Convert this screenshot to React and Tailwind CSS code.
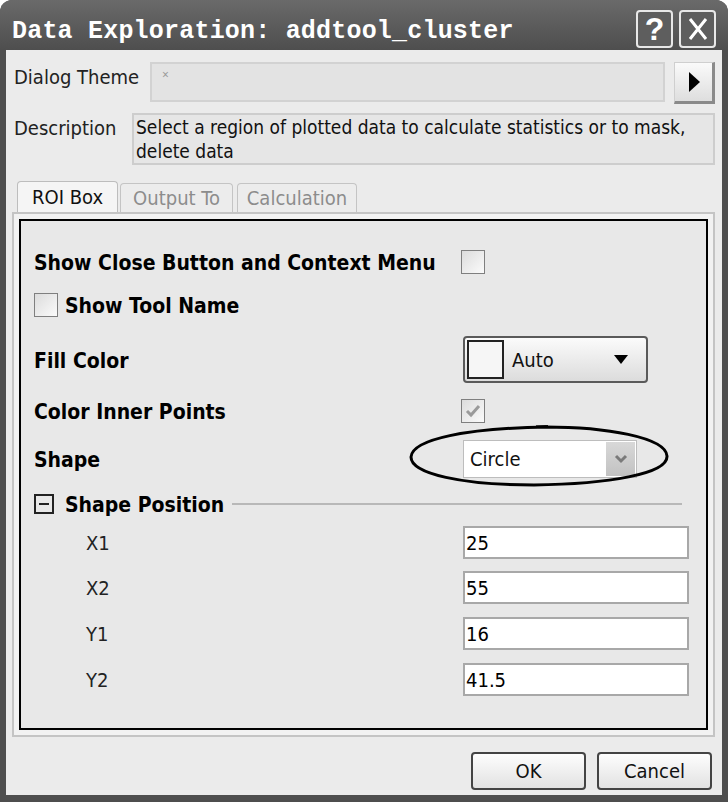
import React from "react";

const sans = "font-['DejaVu_Sans_Condensed','Liberation_Sans',sans-serif]";
const bold = `text-[21px] font-bold text-black pt-[4px] ${sans}`;

function CheckBox({ checked }) {
  return (
    <div className="w-[24px] h-[24px] border border-[#7f7f7f] bg-gradient-to-br from-[#dcdcdc] to-[#fbfbfb] flex items-center justify-center">
      {checked && (
        <svg width="16" height="14" viewBox="0 0 16 14">
          <path d="M2 7 L6 11 L14 2" stroke="#9a9a9a" strokeWidth="3" fill="none" />
        </svg>
      )}
    </div>
  );
}

function NumField({ label, value, mt }) {
  return (
    <div className={`flex items-center h-[33px] ${mt}`}>
      <div className={`w-[442px] pl-[65px] text-[20px] text-[#222] ${sans}`}>{label}</div>
      <div className={`w-[226px] h-[33px] bg-white border-2 border-[#a8a8a8] flex items-center pl-[1px] text-[20px] text-black ${sans}`}>
        {value}
      </div>
    </div>
  );
}

export default function App() {
  return (
    <div className="w-[728px] h-[802px] bg-[#4e4e4e] rounded-t-[12px] flex flex-col overflow-hidden">
      {/* title bar */}
      <div className="h-[50px] flex items-start pl-[12px] pr-[12px] bg-gradient-to-b from-[#6a6a6a] to-[#4e4e4e]">
        <div className="flex-1 text-white font-bold text-[25px] font-['Liberation_Mono',monospace] tracking-[0.2px] pt-[17px] leading-[30px]">
          Data Exploration: addtool_cluster
        </div>
        <div className="flex gap-[6px] pt-[10px]">
          <div className="w-[37px] h-[38px] rounded-[4px] border-2 border-[#e8e8e8] bg-[#5e5e5e] flex items-center justify-center text-white text-[32px] font-bold font-['Liberation_Sans',sans-serif]">
            ?
          </div>
          <div className="w-[37px] h-[38px] rounded-[4px] border-2 border-[#e8e8e8] bg-[#5e5e5e] flex items-center justify-center">
            <svg width="22" height="26" viewBox="0 0 22 26">
              <path d="M3 3 L19 23 M19 3 L3 23" stroke="white" strokeWidth="3" />
            </svg>
          </div>
        </div>
      </div>

      {/* body */}
      <div className="flex-1 mx-[6px] mb-[7px] bg-[#ebebeb] flex flex-col">
        {/* dialog theme */}
        <div className="flex items-start mt-[12px] h-[42px]">
          <div className={`w-[144px] pl-[8px] text-[20px] text-[#222] ${sans}`}>Dialog Theme</div>
          <div className="w-[515px] h-[40px] border-2 border-[#d2d2d2] bg-[#e3e3e3] flex items-start pl-[10px] pt-[2px] text-[#9a9a9a] text-[12px]">
            ×
          </div>
          <div className="ml-[9px] w-[41px] h-[42px] bg-gradient-to-b from-[#fafafa] to-[#dedede] border border-[#cfcfcf] border-r-[3px] border-b-[3px] border-r-[#8a8a8a] border-b-[#8a8a8a] flex items-center justify-center">
            <svg width="14" height="22" viewBox="0 0 14 22">
              <path d="M2 1 L13 11 L2 21 Z" fill="black" />
            </svg>
          </div>
        </div>

        {/* description */}
        <div className="flex items-start mt-[9px]">
          <div className={`w-[126px] pl-[8px] text-[20px] text-[#222] ${sans}`}>Description</div>
          <div className={`w-[583px] h-[52px] border-2 border-[#cdcdcd] bg-[#e6e6e6] pl-[2px] leading-[24px] text-[19px] text-[#111] ${sans}`}>
            Select a region of plotted data to calculate statistics or to mask,
            <br />
            delete data
          </div>
        </div>

        {/* tabs */}
        <div className={`flex items-end mt-[16px] ml-[11px] h-[31px] text-[20px] ${sans}`}>
          <div className="w-[101px] h-[31px] bg-[#f5f5f5] border border-b-0 border-[#bdbdbd] rounded-t-[4px] flex items-center justify-center text-[#111]">
            ROI Box
          </div>
          <div className="ml-[2px] w-[113px] h-[29px] bg-[#ececec] border border-b-0 border-[#c4c4c4] rounded-t-[4px] flex items-center justify-center text-[#8c8c8c]">
            Output To
          </div>
          <div className="ml-[4px] w-[120px] h-[29px] bg-[#ececec] border border-b-0 border-[#c4c4c4] rounded-t-[4px] flex items-center justify-center text-[#8c8c8c]">
            Calculation
          </div>
        </div>

        {/* tab panel */}
        <div className="ml-[6px] w-[703px] h-[525px] border-2 border-[#c4c4c4] bg-[#f2f2f2] p-[5px]">
          <div className="w-full h-full border-2 border-black bg-[#e8e8e8] pt-[29px] flex flex-col">
            <div className="flex items-center h-[24px]">
              <div className={`w-[440px] pl-[13px] ${bold}`}>Show Close Button and Context Menu</div>
              <CheckBox />
            </div>

            <div className="flex items-center h-[24px] mt-[19px] pl-[13px]">
              <CheckBox />
              <div className={`ml-[7px] ${bold}`}>Show Tool Name</div>
            </div>

            <div className="flex items-center h-[47px] mt-[19px]">
              <div className={`w-[442px] pl-[13px] ${bold}`}>Fill Color</div>
              <div className="w-[185px] h-[47px] rounded-[4px] border-2 border-[#5a5a5a] bg-gradient-to-b from-[#fbfbfb] to-[#dcdcdc] flex items-center pl-[2px] pr-[18px]">
                <div className="w-[37px] h-[39px] border-2 border-[#222] bg-[#f6f6f6]" />
                <div className={`ml-[8px] flex-1 text-[20px] text-[#111] ${sans}`}>Auto</div>
                <svg width="14" height="9" viewBox="0 0 14 9">
                  <path d="M0 0 L14 0 L7 9 Z" fill="black" />
                </svg>
              </div>
            </div>

            <div className="flex items-center h-[24px] mt-[16px]">
              <div className={`w-[440px] pl-[13px] ${bold}`}>Color Inner Points</div>
              <CheckBox checked />
            </div>

            <div className="flex items-center h-[38px] mt-[17px]">
              <div className={`w-[442px] pl-[13px] ${bold}`}>Shape</div>
              <div className="relative w-[174px] h-[38px] bg-white border border-[#bdbdbd] flex items-center pl-[6px] pr-[1px]">
                <div className={`flex-1 text-[20px] text-[#111] ${sans}`}>Circle</div>
                <div className="w-[29px] h-[34px] bg-gradient-to-b from-[#d8d8d8] to-[#c2c2c2] flex items-center justify-center">
                  <svg width="14" height="10" viewBox="0 0 14 10">
                    <path d="M2 2 L7 7 L12 2" stroke="#7a7a7a" strokeWidth="3" fill="none" />
                  </svg>
                </div>
                <svg className="absolute left-[-56px] top-[-17px]" width="262" height="64" viewBox="0 0 262 64">
                  <path
                    d="M128 3 C 200 2, 258 14, 259 32 C 260 50, 200 60, 126 61 C 55 61, 3 50, 3 33 C 4 15, 60 4, 140 3"
                    stroke="black"
                    strokeWidth="3"
                    fill="none"
                  />
                </svg>
              </div>
            </div>

            <div className="flex items-center h-[20px] mt-[16px] pl-[13px] pr-[24px]">
              <div className="w-[20px] h-[20px] border-2 border-[#222] flex items-center justify-center">
                <div className="w-[10px] h-[2px] bg-[#222]" />
              </div>
              <div className={`ml-[11px] ${bold}`}>Shape Position</div>
              <div className="ml-[8px] flex-1 h-[2px] bg-[#b8b8b8]" />
            </div>

            <NumField label="X1" value="25" mt="mt-[12px]" />
            <NumField label="X2" value="55" mt="mt-[12px]" />
            <NumField label="Y1" value="16" mt="mt-[13px]" />
            <NumField label="Y2" value="41.5" mt="mt-[13px]" />
          </div>
        </div>

        {/* buttons */}
        <div className={`flex justify-end gap-[11px] mt-[15px] pr-[10px] text-[20px] ${sans}`}>
          <div className="w-[115px] h-[38px] rounded-[4px] border-2 border-[#444] bg-gradient-to-b from-[#fdfdfd] to-[#e2e2e2] flex items-center justify-center text-[#111]">
            OK
          </div>
          <div className="w-[115px] h-[38px] rounded-[4px] border-2 border-[#444] bg-gradient-to-b from-[#fdfdfd] to-[#e2e2e2] flex items-center justify-center text-[#111]">
            Cancel
          </div>
        </div>
      </div>
    </div>
  );
}
